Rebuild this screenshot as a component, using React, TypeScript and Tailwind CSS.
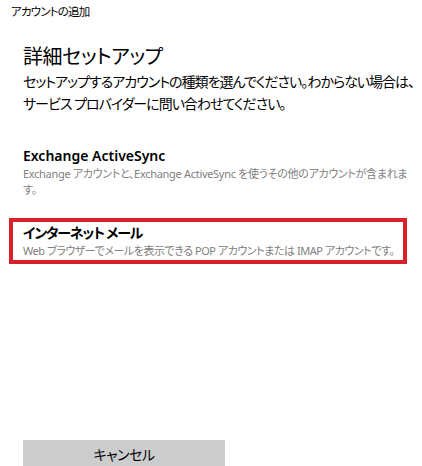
const font = "font-['Noto_Sans','Noto_Sans_CJK_JP',sans-serif] [font-feature-settings:'palt']";

export default function App() {
  return (
    <div className={`w-[422px] h-[466px] overflow-hidden bg-white text-black ${font}`}>
      <div className="pl-[11px] pt-[3px] text-[11.5px] leading-[18px] tracking-[-0.8px]">アカウントの追加</div>

      <div className="pl-[23px] mt-[22px]">
        <h1 className="text-[20px] leading-[28px] font-normal tracking-[-0.4px]">詳細セットアップ</h1>
        <p className="text-[14px] leading-[22px] tracking-[-1px] whitespace-nowrap">
          セットアップするアカウントの種類を選んでください。わからない場合は、
          <br />
          サービス プロバイダーに問い合わせてください。
        </p>
      </div>

      <div className="pl-[23px] mt-[31px]">
        <div className="text-[14px] leading-[20px] font-semibold">Exchange ActiveSync</div>
        <div className="text-[11px] leading-[16px] tracking-[-0.3px] text-[#808080] whitespace-nowrap">
          Exchange アカウントと、Exchange ActiveSync を使うその他のアカウントが含まれま
          <br />
          す。
        </div>
      </div>

      <div className="ml-[9px] mt-[20px] w-[398px] h-[46px] border-[4px] border-[#d9212c] pl-[10px] pt-[1px]">
        <div className="text-[14px] leading-[20px] font-semibold tracking-[-1.2px]">インターネット メール</div>
        <div className="text-[11px] leading-[16px] tracking-[-0.45px] text-[#808080] whitespace-nowrap">
          Web ブラウザーでメールを表示できる POP アカウントまたは IMAP アカウントです。
        </div>
      </div>

      <div className="pl-[23px] mt-[176px]">
        <button className="w-[202px] h-[32px] bg-[#cccccc] text-[14px] leading-[20px] tracking-[-0.5px] pb-[2px]">
          キャンセル
        </button>
      </div>
    </div>
  );
}
